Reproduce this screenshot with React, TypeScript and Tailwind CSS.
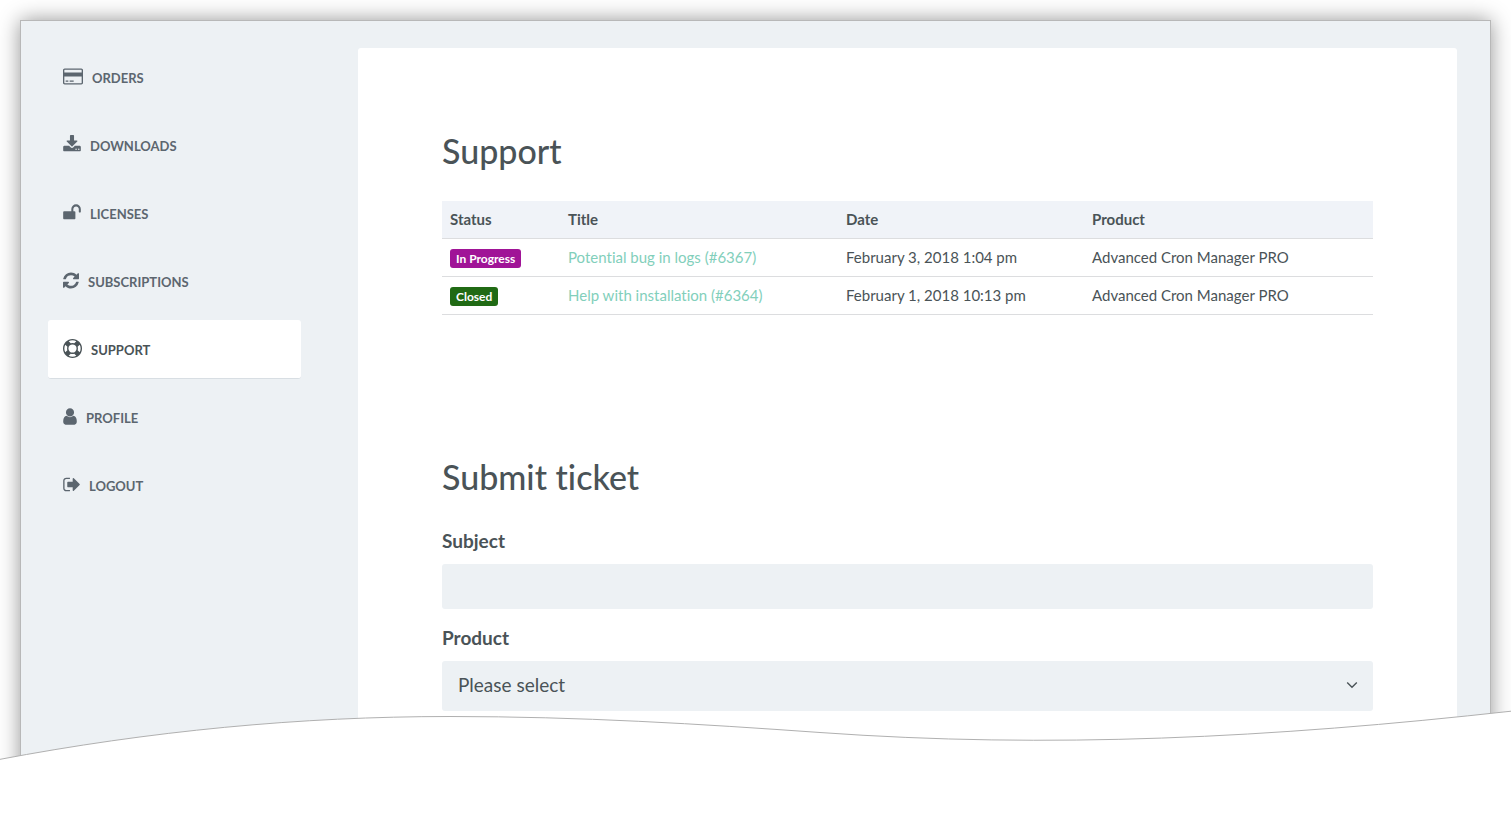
type NavItem = {
  label: string;
  viewBox: string;
  iconClass: string;
  path: string;
  active?: boolean;
};

type Ticket = {
  status: string;
  badgeClass: string;
  title: string;
  date: string;
  product: string;
};

const navItems: NavItem[] = [
  {
    label: "Orders",
    viewBox: "0 0 1920 1792",
    iconClass: "w-5",
    path: "M1760 128q66 0 113 47t47 113v1216q0 66-47 113t-113 47h-1600q-66 0-113-47t-47-113v-1216q0-66 47-113t113-47h1600zm-1600 128q-13 0-22.5 9.5t-9.5 22.5v224h1664v-224q0-13-9.5-22.5t-22.5-9.5h-1600zm1600 1280q13 0 22.5-9.5t9.5-22.5v-608h-1664v608q0 13 9.5 22.5t22.5 9.5h1600zm-1504-128v-128h256v128h-256zm384 0v-128h384v128h-384z",
  },
  {
    label: "Downloads",
    viewBox: "64 0 1664 1792",
    iconClass: "w-[18px]",
    path: "M1344 1344q0-26-19-45t-45-19-45 19-19 45 19 45 45 19 45-19 19-45zm256 0q0-26-19-45t-45-19-45 19-19 45 19 45 45 19 45-19 19-45zm128-224v320q0 40-28 68t-68 28h-1472q-40 0-68-28t-28-68v-320q0-40 28-68t68-28h465l135 136q58 56 136 56t136-56l136-136h464q40 0 68 28t28 68zm-325-569q17 41-14 70l-448 448q-18 19-45 19t-45-19l-448-448q-31-29-14-70 17-39 59-39h256v-448q0-26 19-45t45-19h256q26 0 45 19t19 45v448h256q42 0 59 39z",
  },
  {
    label: "Licenses",
    viewBox: "64 0 1664 1792",
    iconClass: "w-[18px]",
    path: "M1728 576v256q0 26-19 45t-45 19h-64q-26 0-45-19t-19-45v-256q0-106-75-181t-181-75-181 75-75 181v192h96q40 0 68 28t28 68v576q0 40-28 68t-68 28h-960q-40 0-68-28t-28-68v-576q0-40 28-68t68-28h672v-192q0-185 131.5-316.5t316.5-131.5 316.5 131.5 131.5 316.5z",
  },
  {
    label: "Subscriptions",
    viewBox: "128 0 1536 1792",
    iconClass: "w-4",
    path: "M1639 1056q0 5-1 7-64 268-268 434.5t-478 166.5q-146 0-282.5-55t-243.5-157l-129 129q-19 19-45 19t-45-19-19-45v-448q0-26 19-45t45-19h448q26 0 45 19t19 45-19 45l-137 137q71 66 161 102t187 36q134 0 250-65t186-179q11-17 53-117 8-23 30-23h192q13 0 22.5 9.5t9.5 22.5zm25-800v448q0 26-19 45t-45 19h-448q-26 0-45-19t-19-45 19-45l138-138q-148-137-349-137-134 0-250 65t-186 179q-11 17-53 117-8 23-30 23h-199q-13 0-22.5-9.5t-9.5-22.5v-7q65-268 270-434.5t480-166.5q146 0 284 55.5t245 156.5l130-129q19-19 45-19t45 19 19 45z",
  },
  {
    label: "Support",
    viewBox: "0 0 1792 1792",
    iconClass: "w-[19px]",
    path: "M896 0q182 0 348 71t286 191 191 286 71 348-71 348-191 286-286 191-348 71-348-71-286-191-191-286-71-348 71-348 191-286 286-191 348-71zm0 128q-190 0-361 90l194 194q82-28 167-28t167 28l194-194q-171-90-361-90zm-678 1129l194-194q-28-82-28-167t28-167l-194-194q-90 171-90 361t90 361zm678 407q190 0 361-90l-194-194q-82 28-167 28t-167-28l-194 194q171 90 361 90zm0-384q159 0 271.5-112.5t112.5-271.5-112.5-271.5-271.5-112.5-271.5 112.5-112.5 271.5 112.5 271.5 271.5 112.5zm484-217l194 194q90-171 90-361t-90-361l-194 194q28 82 28 167t-28 167z",
    active: true,
  },
  {
    label: "Profile",
    viewBox: "256 0 1280 1792",
    iconClass: "w-[14px]",
    path: "M1536 1399q0 109-62.5 187t-150.5 78h-854q-88 0-150.5-78t-62.5-187q0-85 8.5-160.5t31.5-152 58.5-131 94-89 134.5-34.5q131 128 313 128t313-128q76 0 134.5 34.5t94 89 58.5 131 31.5 152 8.5 160.5zm-256-887q0 159-112.5 271.5t-271.5 112.5-271.5-112.5-112.5-271.5 112.5-271.5 271.5-112.5 271.5 112.5 112.5 271.5z",
  },
  {
    label: "Logout",
    viewBox: "64 0 1568 1792",
    iconClass: "w-[17px]",
    path: "M704 1440q0 4 1 20t.5 26.5-3 23.5-10 19.5-20.5 6.5h-320q-119 0-203.5-84.5t-84.5-203.5v-704q0-119 84.5-203.5t203.5-84.5h320q13 0 22.5 9.5t9.5 22.5q0 4 1 20t.5 26.5-3 23.5-10 19.5-20.5 6.5h-320q-66 0-113 47t-47 113v704q0 66 47 113t113 47h312l11.5 1 11.5 3 8 5.5 7 9 2 13.5zm928-544q0 26-19 45l-544 544q-19 19-45 19t-45-19-19-45v-288h-448q-26 0-45-19t-19-45v-384q0-26 19-45t45-19h448v-288q0-26 19-45t45-19 45 19l544 544q19 19 19 45z",
  },
];

const tickets: Ticket[] = [
  {
    status: "In Progress",
    badgeClass: "bg-[#a01497]",
    title: "Potential bug in logs (#6367)",
    date: "February 3, 2018 1:04 pm",
    product: "Advanced Cron Manager PRO",
  },
  {
    status: "Closed",
    badgeClass: "bg-[#206a14]",
    title: "Help with installation (#6364)",
    date: "February 1, 2018 10:13 pm",
    product: "Advanced Cron Manager PRO",
  },
];

function Sidebar() {
  return (
    <nav className="flex w-[253px] shrink-0 flex-col gap-[9px]">
      {navItems.map((item) => (
        <a
          key={item.label}
          href={`#${item.label.toLowerCase()}`}
          aria-current={item.active ? "page" : undefined}
          className={`flex h-[59px] items-center gap-[9px] rounded-[3px] border-b px-[15px] pt-1 text-[13px] font-bold uppercase ${
            item.active
              ? "border-[#d8dee3] bg-white text-[#4a5357]"
              : "border-transparent text-[#5c666f]"
          }`}
        >
          <svg
            className={`mb-[6px] h-[19px] shrink-0 ${item.iconClass}`}
            viewBox={item.viewBox}
            fill="currentColor"
            aria-hidden="true"
          >
            <path d={item.path} />
          </svg>
          {item.label}
        </a>
      ))}
    </nav>
  );
}

function TicketTable() {
  return (
    <table className="mt-[30px] w-full table-fixed text-left text-[15px] leading-5">
      <colgroup>
        <col className="w-[118px]" />
        <col className="w-[278px]" />
        <col className="w-[246px]" />
        <col />
      </colgroup>
      <thead className="bg-[#f0f3f8]">
        <tr className="h-[37px] border-b border-[#dcdddf]">
          <th className="px-2 font-bold">Status</th>
          <th className="px-2 font-bold">Title</th>
          <th className="px-2 font-bold">Date</th>
          <th className="px-2 font-bold">Product</th>
        </tr>
      </thead>
      <tbody>
        {tickets.map((ticket) => (
          <tr key={ticket.title} className="h-[38px] border-b border-[#dcdddf]">
            <td className="px-2">
              <span
                className={`mt-[2px] block w-fit rounded-[3px] px-[6px] text-xs leading-[19px] font-bold text-white ${ticket.badgeClass}`}
              >
                {ticket.status}
              </span>
            </td>
            <td className="px-2">
              <a href="#ticket" className="text-[#82cfbb]">
                {ticket.title}
              </a>
            </td>
            <td className="px-2">{ticket.date}</td>
            <td className="px-2">{ticket.product}</td>
          </tr>
        ))}
      </tbody>
    </table>
  );
}

function TicketForm() {
  return (
    <form className="flex flex-col">
      <label htmlFor="subject" className="mt-8 text-[19px] leading-6 font-bold">
        Subject
      </label>
      <input
        id="subject"
        type="text"
        className="mt-[11px] h-[45px] w-full rounded-[3px] bg-[#edf1f4] px-4 text-[19px] outline-none"
      />
      <label htmlFor="product" className="mt-[17px] text-[19px] leading-6 font-bold">
        Product
      </label>
      <div className="relative mt-[11px]">
        <select
          id="product"
          className="h-[50px] w-full appearance-none rounded-[3px] bg-[#edf1f4] px-4 text-[19px] outline-none"
        >
          <option>Please select</option>
          <option>Advanced Cron Manager PRO</option>
        </select>
        <svg
          className="pointer-events-none absolute top-5 right-[15px] h-2 w-3"
          viewBox="0 0 12 8"
          fill="none"
          stroke="currentColor"
          strokeWidth="1.4"
          aria-hidden="true"
        >
          <path d="M1.2 1.5 6 6.2 10.8 1.5" />
        </svg>
      </div>
    </form>
  );
}

function Wave() {
  return (
    <svg
      className="absolute bottom-0 left-0 h-[121px] w-full"
      viewBox="0 0 1511 121"
      preserveAspectRatio="none"
      aria-hidden="true"
    >
      <path
        d="M-2 49.7C150 21 300 6.5 450 6.5C580 6.5 700 14 820 22.5C1050 39 1270 28 1513 1V123H-2Z"
        fill="#fff"
        stroke="#b0b0b0"
      />
    </svg>
  );
}

export default function App() {
  return (
    <div className="relative overflow-hidden bg-white px-5 pt-5 pb-[51px] font-['Lato','Liberation_Sans',sans-serif] text-[#4a5357] [font-variant-ligatures:none]">
      <div className="flex gap-[57px] border border-[#b8b8b8] bg-[#edf1f4] pt-[27px] pr-[33px] pl-[27px] shadow-[0_0_20px_rgba(0,0,0,0.42)]">
        <Sidebar />
        <main className="min-w-0 flex-1 rounded-[3px] bg-white px-[84px] pt-[83px] pb-[68px]">
          <h1 className="text-[34px] leading-10 font-medium">Support</h1>
          <TicketTable />
          <h2 className="mt-[142px] text-[34px] leading-10 font-medium">Submit ticket</h2>
          <TicketForm />
        </main>
      </div>
      <Wave />
    </div>
  );
}
